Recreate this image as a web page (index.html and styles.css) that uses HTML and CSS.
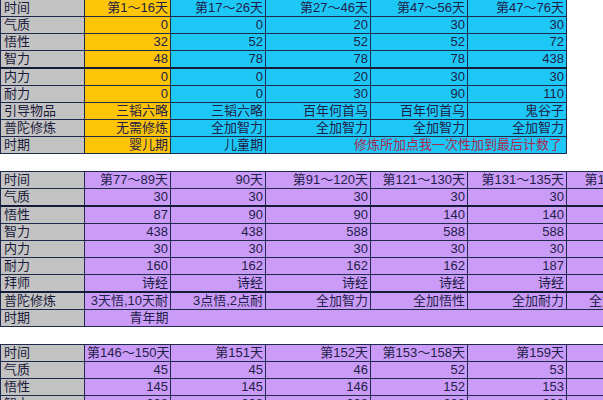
FILE: index.html
```html
<!DOCTYPE html>
<html lang="zh">
<head>
<meta charset="utf-8">
<title>成长表</title>
<link rel="stylesheet" href="styles.css">
</head>
<body>
<div class="sheet">
  <table class="grid grid-top">
    <colgroup><col class="c0"><col class="c1"><col class="c2"><col class="c3"><col class="c4"><col class="c5"></colgroup>
    <tr><td class="lab">时间</td><td class="y">第1～16天</td><td class="b">第17～26天</td><td class="b">第27～46天</td><td class="b">第47～56天</td><td class="b">第47～76天</td></tr>
    <tr><td class="lab">气质</td><td class="y">0</td><td class="b">0</td><td class="b">20</td><td class="b">30</td><td class="b">30</td></tr>
    <tr><td class="lab">悟性</td><td class="y">32</td><td class="b">52</td><td class="b">52</td><td class="b">52</td><td class="b">72</td></tr>
    <tr><td class="lab">智力</td><td class="y">48</td><td class="b">78</td><td class="b">78</td><td class="b">78</td><td class="b">438</td></tr>
    <tr class="thick"><td class="lab">内力</td><td class="y">0</td><td class="b">0</td><td class="b">20</td><td class="b">30</td><td class="b">30</td></tr>
    <tr><td class="lab">耐力</td><td class="y">0</td><td class="b">0</td><td class="b">30</td><td class="b">90</td><td class="b">110</td></tr>
    <tr><td class="lab">引导物品</td><td class="y">三韬六略</td><td class="b">三韬六略</td><td class="b">百年何首乌</td><td class="b">百年何首乌</td><td class="b">鬼谷子</td></tr>
    <tr><td class="lab">普陀修炼</td><td class="y">无需修炼</td><td class="b">全加智力</td><td class="b">全加智力</td><td class="b">全加智力</td><td class="b">全加智力</td></tr>
    <tr><td class="lab">时期</td><td class="y">婴儿期</td><td class="b">儿童期</td><td class="b note" colspan="3">修炼所加点我一次性加到最后计数了</td></tr>
  </table>

  <table class="grid grid-wide">
    <colgroup><col class="c0"><col class="c1"><col class="c2"><col class="c3"><col class="c4"><col class="c5"><col class="c6"></colgroup>
    <tr><td class="lab">时间</td><td class="p">第77～89天</td><td class="p">90天</td><td class="p">第91～120天</td><td class="p">第121～130天</td><td class="p">第131～135天</td><td class="p">第136～145天</td></tr>
    <tr><td class="lab">气质</td><td class="p">30</td><td class="p">30</td><td class="p">30</td><td class="p">30</td><td class="p">30</td><td class="p"></td></tr>
    <tr class="thick"><td class="lab">悟性</td><td class="p">87</td><td class="p">90</td><td class="p">90</td><td class="p">140</td><td class="p">140</td><td class="p"></td></tr>
    <tr><td class="lab">智力</td><td class="p">438</td><td class="p">438</td><td class="p">588</td><td class="p">588</td><td class="p">588</td><td class="p"></td></tr>
    <tr><td class="lab">内力</td><td class="p">30</td><td class="p">30</td><td class="p">30</td><td class="p">30</td><td class="p">30</td><td class="p"></td></tr>
    <tr><td class="lab">耐力</td><td class="p">160</td><td class="p">162</td><td class="p">162</td><td class="p">162</td><td class="p">187</td><td class="p"></td></tr>
    <tr><td class="lab">拜师</td><td class="p">诗经</td><td class="p">诗经</td><td class="p">诗经</td><td class="p">诗经</td><td class="p">诗经</td><td class="p"></td></tr>
    <tr class="thick"><td class="lab">普陀修炼</td><td class="p">3天悟,10天耐</td><td class="p">3点悟,2点耐</td><td class="p">全加智力</td><td class="p">全加悟性</td><td class="p">全加耐力</td><td class="p">全加智力耐力</td></tr>
    <tr><td class="lab">时期</td><td class="p open-r">青年期</td><td class="p open-l" colspan="5"></td></tr>
  </table>

  <table class="grid grid-wide">
    <colgroup><col class="c0"><col class="c1"><col class="c2"><col class="c3"><col class="c4"><col class="c5"><col class="c6"></colgroup>
    <tr><td class="lab">时间</td><td class="p">第146～150天</td><td class="p">第151天</td><td class="p">第152天</td><td class="p">第153～158天</td><td class="p">第159天</td><td class="p"></td></tr>
    <tr><td class="lab">气质</td><td class="p">45</td><td class="p">45</td><td class="p">46</td><td class="p">52</td><td class="p">53</td><td class="p"></td></tr>
    <tr><td class="lab">悟性</td><td class="p">145</td><td class="p">145</td><td class="p">146</td><td class="p">152</td><td class="p">153</td><td class="p"></td></tr>
    <tr><td class="lab">智力</td><td class="p">638</td><td class="p">638</td><td class="p">638</td><td class="p">638</td><td class="p">638</td><td class="p"></td></tr>
  </table>
</div>
</body>
</html>
```

FILE: styles.css
```css
html, body {
  margin: 0;
  padding: 0;
  background: #ffffff;
}

.sheet {
  width: 603px;
  height: 400px;
  overflow: hidden;
  display: flex;
  flex-direction: column;
  gap: 17px;
  font-family: "Liberation Sans", "Noto Sans CJK SC", sans-serif;
  font-size: 13px;
  color: #1e2048;
}

.grid {
  border-collapse: collapse;
  table-layout: fixed;
  flex: none;
}

.grid-top { width: 566px; margin-top: -1px; }
.grid-wide { width: 669px; }

.c0 { width: 84px; }
.c1 { width: 86px; }
.c2 { width: 95px; }
.c3 { width: 105px; }
.c4 { width: 97px; }
.c5 { width: 99px; }
.c6 { width: 103px; }

.grid td {
  height: 16px;
  line-height: 16px;
  padding: 0 2px 0 2px;
  border: 1px solid #1f2a4c;
  white-space: nowrap;
  overflow: hidden;
  text-align: right;
}

.grid .thick td { border-top: 2px solid #141c38; }

.grid td.lab {
  background: #c3c3c3;
  text-align: left;
  padding-left: 3px;
  color: #1a1a3a;
}

.grid td.y { background: #fdc505; }
.grid td.b { background: #1ec8f6; }
.grid td.p { background: #cb9cf7; }

.grid td.note {
  color: #a8284e;
  padding-right: 4px;
}

.grid td.open-r { border-right: none; }
.grid td.open-l { border-left: none; }
```
